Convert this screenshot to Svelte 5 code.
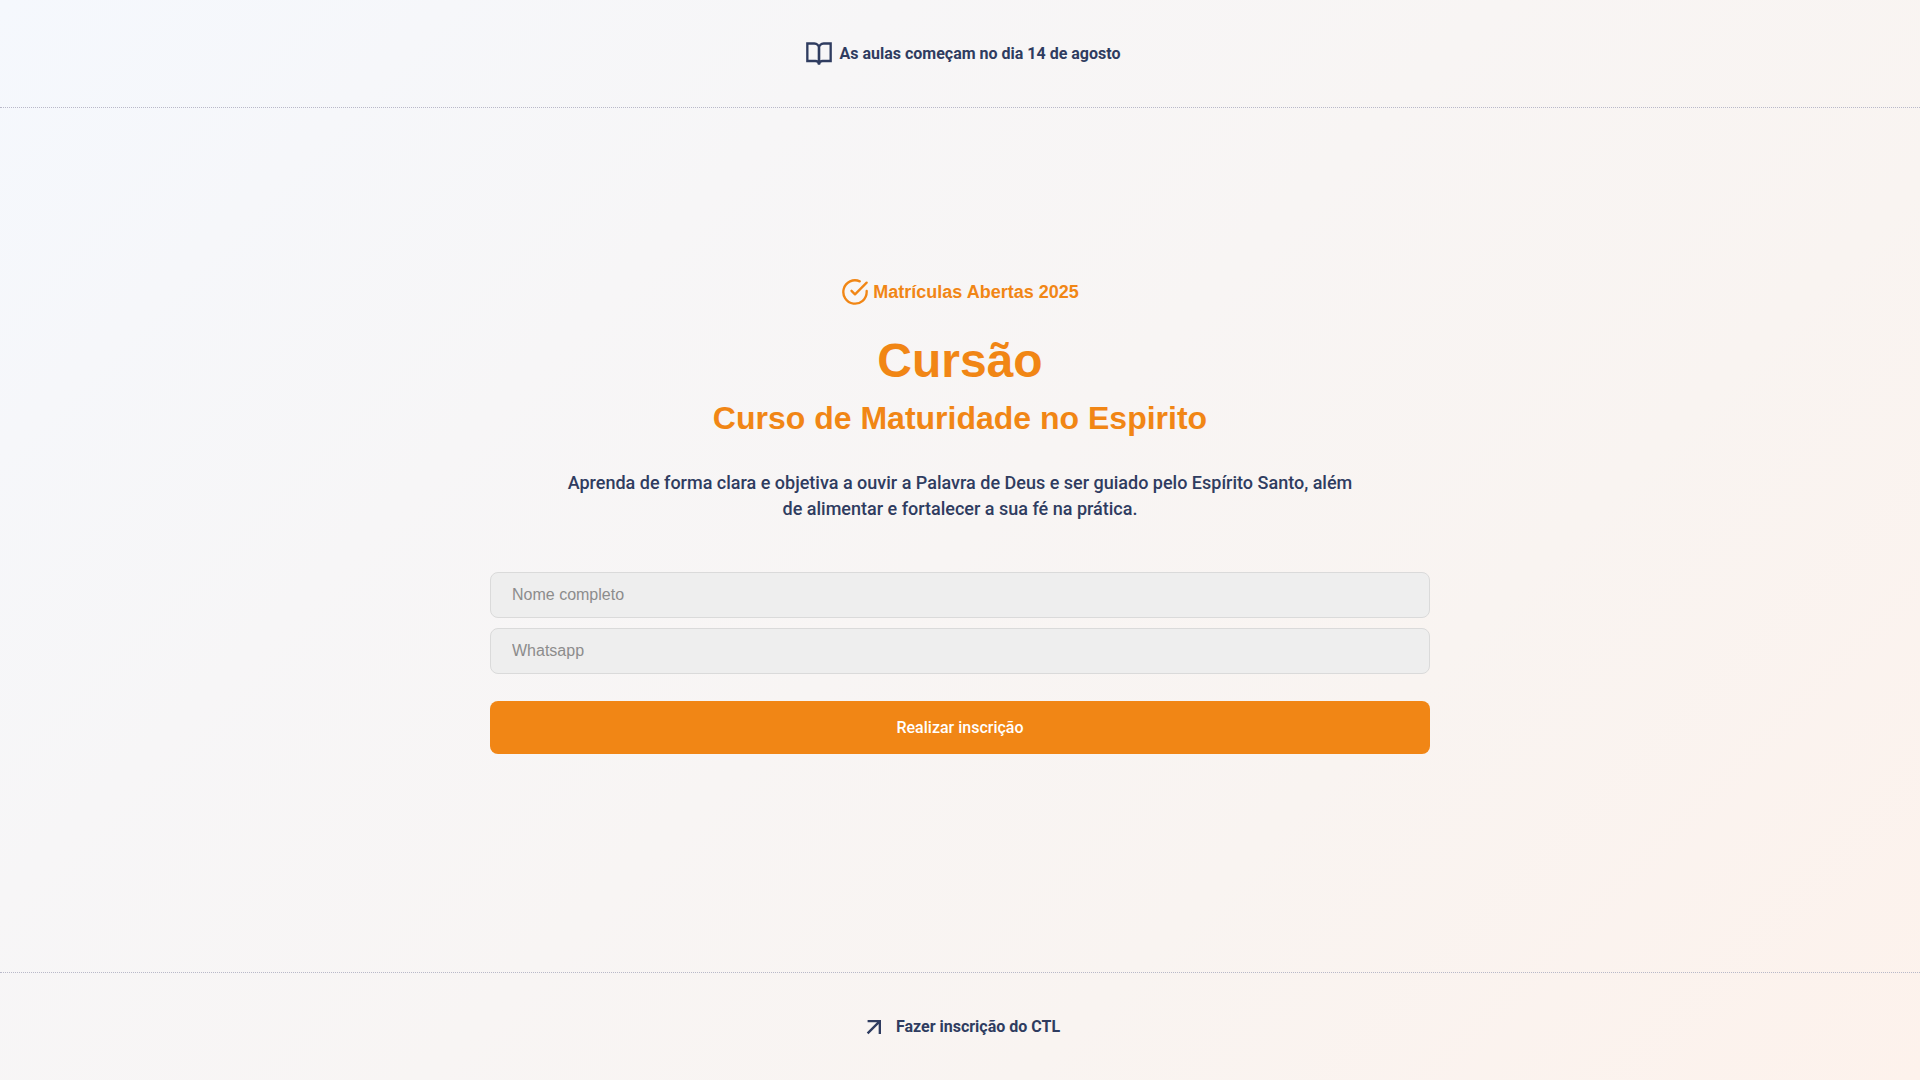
<script>
  let name = $state('');
  let phone = $state('');
</script>

<div class="page">
  <header class="bar">
    <svg class="icon sharp" viewBox="0 0 24 24" aria-hidden="true">
      <path d="M2 3h6a4 4 0 0 1 4 4v14a3 3 0 0 0-3-3H2z" />
      <path d="M22 3h-6a4 4 0 0 0-4 4v14a3 3 0 0 1 3-3h7z" />
    </svg>
    <span>As aulas começam no dia 14 de agosto</span>
  </header>

  <main>
    <p class="status">
      <svg class="icon" viewBox="0 0 24 24" aria-hidden="true">
        <path d="M22 11.08V12a10 10 0 1 1-5.93-9.14" />
        <path d="M22 4 12 14.01l-3-3" />
      </svg>
      <span>Matrículas Abertas 2025</span>
    </p>
    <h1>Cursão</h1>
    <h2>Curso de Maturidade no Espirito</h2>
    <p class="intro">
      Aprenda de forma clara e objetiva a ouvir a Palavra de Deus e ser guiado pelo Espírito Santo,
      além de alimentar e fortalecer a sua fé na prática.
    </p>
    <form onsubmit={(event) => event.preventDefault()}>
      <input type="text" aria-label="Nome completo" placeholder="Nome completo" bind:value={name} />
      <input type="tel" aria-label="Whatsapp" placeholder="Whatsapp" bind:value={phone} />
      <button type="submit">Realizar inscrição</button>
    </form>
  </main>

  <footer class="bar">
    <a href="#ctl">
      <svg class="icon sharp" viewBox="0 0 24 24" aria-hidden="true">
        <path d="M6.5 17.5 17 7M6.5 7H17v11" />
      </svg>
      <span>Fazer inscrição do CTL</span>
    </a>
  </footer>
</div>

<style>
  :global(body) {
    margin: 0;
  }

  .page {
    box-sizing: border-box;
    min-height: 100vh;
    display: flex;
    flex-direction: column;
    color: #2f3c60;
    font-family: Roboto, sans-serif;
    font-size: 16px;
    background: linear-gradient(135deg, #f5f8fd 0%, #f7f6f7 30%, #f9f4f1 70%, #fdf2ec 100%);
  }

  .bar {
    box-sizing: border-box;
    min-height: 108px;
    display: flex;
    align-items: center;
    justify-content: center;
    gap: 7px;
    font-weight: 700;
  }

  header {
    padding-left: 5px;
    border-bottom: 1px dotted #b9b9c9;
  }

  footer {
    border-top: 1px dotted #b9b9c9;
  }

  .icon {
    width: 28px;
    height: 28px;
    flex: none;
    fill: none;
    stroke: currentColor;
    stroke-width: 2;
    stroke-linecap: round;
    stroke-linejoin: round;
  }

  .sharp {
    stroke-linecap: butt;
    stroke-linejoin: miter;
    stroke-miterlimit: 2;
  }

  a {
    display: flex;
    align-items: center;
    gap: 8px;
    color: inherit;
    text-decoration: none;
  }

  main {
    box-sizing: border-box;
    width: 100%;
    max-width: 972px;
    margin: 0 auto;
    padding: 0 16px 48px;
    flex: 1;
    display: flex;
    flex-direction: column;
    align-items: center;
    justify-content: center;
    text-align: center;
  }

  .status,
  h1,
  h2 {
    margin: 0;
    color: #f18615;
    font-family: 'Liberation Sans', Arial, sans-serif;
    font-weight: 700;
  }

  .status {
    display: flex;
    align-items: center;
    gap: 4px;
    font-size: 18px;
    line-height: 28px;
  }

  h1 {
    margin-top: 25px;
    font-size: 48px;
    line-height: 60px;
  }

  h2 {
    margin-top: 7px;
    font-size: 32px;
    line-height: 40px;
  }

  .intro {
    max-width: 800px;
    margin: 32px 0 50px;
    font-size: 18px;
    font-weight: 500;
    line-height: 26px;
  }

  form {
    width: 100%;
    display: flex;
    flex-direction: column;
    gap: 10px;
  }

  input {
    box-sizing: border-box;
    height: 46px;
    padding: 0 21px;
    border: 1px solid #dadada;
    border-radius: 8px;
    background: #eee;
    color: #2f3c60;
    font: 16px 'Liberation Sans', Arial, sans-serif;
  }

  input::placeholder {
    color: #8c8c8c;
  }

  button {
    height: 53px;
    margin-top: 17px;
    border: 0;
    border-radius: 8px;
    background: #f18615;
    color: #fff;
    font: 500 16px Roboto, sans-serif;
    cursor: pointer;
  }
</style>
